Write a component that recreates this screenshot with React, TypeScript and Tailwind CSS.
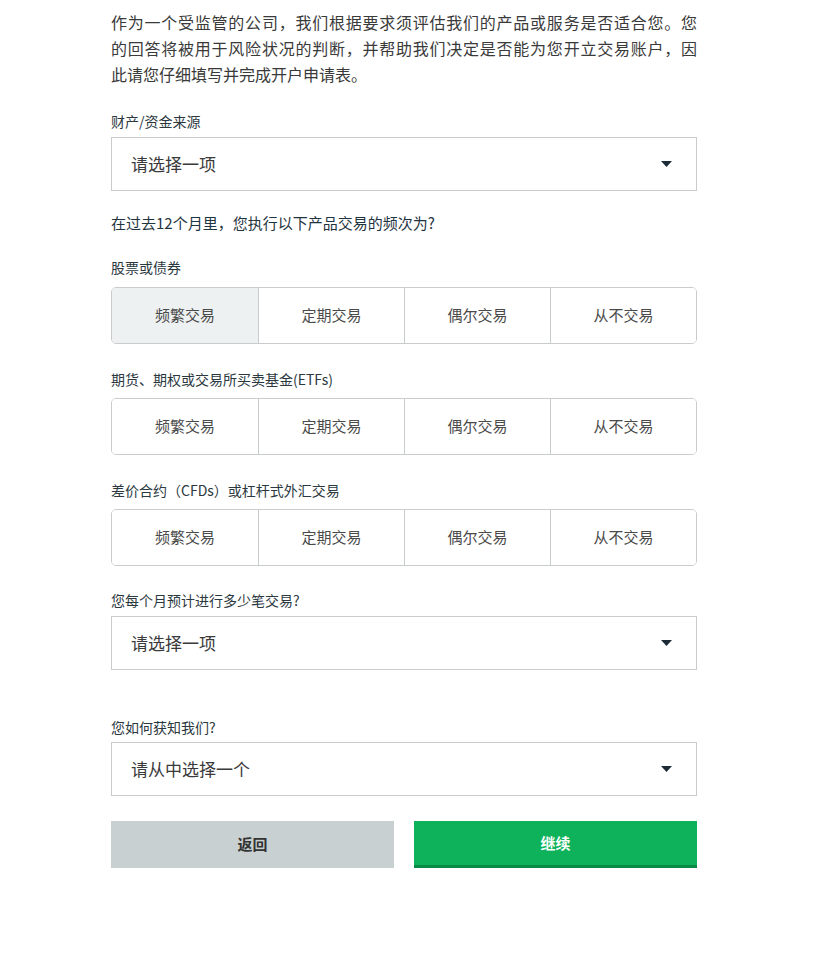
import { useState } from "react";

const FREQ = ["频繁交易", "定期交易", "偶尔交易", "从不交易"];

const INTRO = [
  "作为一个受监管的公司，我们根据要求须评估我们的产品或服务是否适合您。您",
  "的回答将被用于风险状况的判断，并帮助我们决定是否能为您开立交易账户，因",
];

const Caret = () => (
  <svg width="11" height="6" viewBox="0 0 11 6" className="shrink-0">
    <path d="M0 0 H11 L5.5 6 Z" fill="#1d2b36" />
  </svg>
);

const Select = ({ placeholder }: { placeholder: string }) => (
  <div className="flex h-[54px] items-center justify-between border border-[#c9cccd] bg-white pl-[19px] pr-[24px]">
    <span className="text-[17px] text-[#3a3a3a]">{placeholder}</span>
    <Caret />
  </div>
);

const Label = ({ children, className = "" }: { children: React.ReactNode; className?: string }) => (
  <div className={`text-[14px] leading-[20px] text-[#2b3840] ${className}`}>{children}</div>
);

const Segmented = ({ initial }: { initial?: number }) => {
  const [active, setActive] = useState<number | undefined>(initial);
  return (
    <div className="grid h-[57px] grid-cols-4 overflow-hidden rounded-[5px] border border-[#c9cccd]">
      {FREQ.map((f, i) => (
        <button
          key={f}
          onClick={() => setActive(i)}
          className={`text-[15px] text-[#4a4a4a] ${i > 0 ? "border-l border-[#c9cccd]" : ""} ${
            active === i ? "bg-[#eef1f2]" : "bg-white"
          }`}
        >
          {f}
        </button>
      ))}
    </div>
  );
};

export default function App() {
  return (
    <div
      className="min-h-[961px] bg-white pl-[111px] pt-[9px]"
      style={{ fontFamily: '"Noto Sans CJK SC", "Noto Sans", sans-serif' }}
    >
      <div className="w-[586px]">
        <div className="text-[16px] leading-[26px] text-[#3a3a3a]">
          {INTRO.map((line) => (
            <div key={line} className="text-justify [text-align-last:justify]">
              {line}
            </div>
          ))}
          <div>此请您仔细填写并完成开户申请表。</div>
        </div>

        <Label className="mt-[24px]">财产/资金来源</Label>
        <div className="mt-[6px]">
          <Select placeholder="请选择一项" />
        </div>

        <div className="mt-[22px] text-[15px] leading-[20px] text-[#1f3441]">
          在过去12个月里，您执行以下产品交易的频次为?
        </div>

        <Label className="mt-[24px]">股票或债券</Label>
        <div className="mt-[10px]">
          <Segmented initial={0} />
        </div>

        <Label className="mt-[25px]">期货、期权或交易所买卖基金(ETFs)</Label>
        <div className="mt-[9px]">
          <Segmented />
        </div>

        <Label className="mt-[25px]">差价合约（CFDs）或杠杆式外汇交易</Label>
        <div className="mt-[9px]">
          <Segmented />
        </div>

        <Label className="mt-[24px]">您每个月预计进行多少笔交易?</Label>
        <div className="mt-[6px]">
          <Select placeholder="请选择一项" />
        </div>

        <Label className="mt-[47px]">您如何获知我们?</Label>
        <div className="mt-[5px]">
          <Select placeholder="请从中选择一个" />
        </div>

        <div className="mt-[25px] flex gap-[20px]">
          <button className="h-[47px] flex-1 bg-[#c8d0d1] text-[15px] font-bold text-[#333]">返回</button>
          <button className="h-[47px] flex-1 border-b-[3px] border-[#0a8a47] bg-[#0db25b] text-[15px] font-bold text-white">
            继续
          </button>
        </div>
      </div>
    </div>
  );
}
